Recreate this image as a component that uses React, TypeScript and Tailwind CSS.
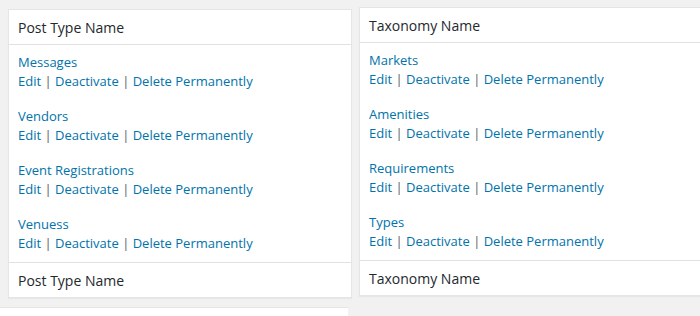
const postTypes = ["Messages", "Vendors", "Event Registrations", "Venuess"];
const taxonomies = ["Markets", "Amenities", "Requirements", "Types"];

const RowActions = () => (
  <div className="text-[#0073aa]">
    <a href="#">Edit</a>
    <span className="text-[#555d66]"> | </span>
    <a href="#">Deactivate</a>
    <span className="text-[#555d66]"> | </span>
    <a href="#">Delete Permanently</a>
  </div>
);

const ListTable = ({
  title,
  items,
  className,
}: {
  title: string;
  items: string[];
  className: string;
}) => (
  <div
    className={`bg-white border border-[#e5e5e5] shadow-[0_1px_1px_rgba(0,0,0,0.04)] ${className}`}
  >
    {/* Header */}
    <div className="px-[9px] pt-2 pb-[7px] border-b border-[#e1e1e1] text-[#23282d]">
      {title}
    </div>

    {/* Rows */}
    <div className="px-[9px] pt-2 pb-[9px] flex flex-col gap-4 text-[13px]">
      {items.map((item) => (
        <div key={item}>
          <a href="#" className="block text-[#0073aa]">
            {item}
          </a>
          <RowActions />
        </div>
      ))}
    </div>

    {/* Footer */}
    <div className="px-[9px] pt-2 pb-[7px] border-t border-[#e1e1e1] text-[#23282d]">
      {title}
    </div>
  </div>
);

export default function App() {
  return (
    <div className="w-[700px] h-[316px] overflow-hidden bg-[#f1f1f1] font-['Open_Sans',sans-serif] text-[14px] leading-[19px]">
      <div className="flex items-start">
        <ListTable
          title="Post Type Name"
          items={postTypes}
          className="ml-2 mt-[9px] w-[344px] shrink-0"
        />
        <ListTable
          title="Taxonomy Name"
          items={taxonomies}
          className="ml-[7px] mt-[7px] w-[360px] shrink-0"
        />
      </div>
      <div className="mt-[9px] w-[348px] h-5 bg-white border-t border-[#e5e5e5]" />
    </div>
  );
}
